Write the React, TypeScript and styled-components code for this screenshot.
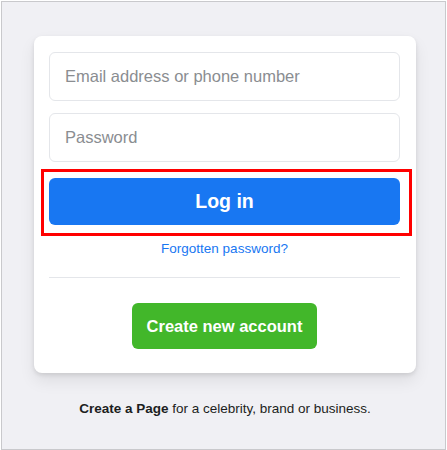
import React from 'react';
import styled, { createGlobalStyle } from 'styled-components';

const GlobalStyle = createGlobalStyle`
  html, body {
    margin: 0;
    padding: 0;
    background: #ffffff;
  }
  body {
    font-family: "Liberation Sans", Arial, Helvetica, sans-serif;
  }
`;

const Frame = styled.div`
  box-sizing: border-box;
  margin: 1px 1px 0 1px;
  height: 449px;
  border: 1px solid #c9c9cc;
  background: #f0f0f4;
  padding: 34px 0 0 32px;
  display: flex;
  flex-direction: column;
  align-items: flex-start;
`;

const Card = styled.div`
  box-sizing: border-box;
  width: 382px;
  background: #ffffff;
  border-radius: 8px;
  box-shadow: 0 2px 4px rgba(0, 0, 0, 0.1), 0 8px 16px rgba(0, 0, 0, 0.08);
  padding: 16px 16px 24px 15px;
  display: flex;
  flex-direction: column;
`;

const Input = styled.input<{ $gap?: number }>`
  box-sizing: border-box;
  width: 100%;
  height: 49px;
  margin: 0 0 ${({ $gap }) => $gap ?? 0}px 0;
  padding: 0 15px;
  border: 1px solid #e4e6ea;
  border-radius: 6px;
  font-family: "Liberation Sans", Arial, sans-serif;
  font-size: 16.5px;
  color: #1c1e21;
  outline: none;
  &::placeholder {
    color: #8a8d91;
  }
`;

// red annotation drawn over the login button
const Highlight = styled.div`
  position: relative;
  margin-top: 16px;
  &::after {
    content: '';
    position: absolute;
    top: -9px;
    left: -8px;
    right: -12px;
    bottom: -11px;
    border: 3px solid #ff0000;
    pointer-events: none;
  }
`;

const LoginButton = styled.button`
  display: block;
  width: 100%;
  height: 47px;
  border: none;
  border-radius: 6px;
  background: #1877f2;
  color: #ffffff;
  font-family: "Liberation Sans", Arial, sans-serif;
  font-size: 19.5px;
  font-weight: 700;
  cursor: pointer;
`;

const ForgotLink = styled.a`
  display: block;
  margin-top: 15px;
  text-align: center;
  color: #1877f2;
  font-size: 13.5px;
  line-height: 18px;
  text-decoration: none;
`;

const Divider = styled.hr`
  width: 100%;
  margin: 19px 0 0 0;
  border: none;
  border-top: 1px solid #e4e6ea;
`;

const CreateButton = styled.button`
  align-self: center;
  margin-top: 25px;
  width: 185px;
  height: 46px;
  border: none;
  border-radius: 6px;
  background: #42b72a;
  color: #ffffff;
  font-family: "Liberation Sans", Arial, sans-serif;
  font-size: 16.5px;
  font-weight: 700;
  cursor: pointer;
`;

const Footer = styled.p`
  width: 382px;
  margin: 27px 0 0 0;
  text-align: center;
  font-size: 13.5px;
  line-height: 18px;
  color: #1c1e21;
  b {
    font-weight: 700;
  }
`;

export default function App() {
  return (
    <>
      <GlobalStyle />
      <Frame>
        <Card>
          <Input type="text" placeholder="Email address or phone number" $gap={12} />
          <Input type="password" placeholder="Password" />
          <Highlight>
            <LoginButton type="button">Log in</LoginButton>
          </Highlight>
          <ForgotLink href="#">Forgotten password?</ForgotLink>
          <Divider />
          <CreateButton type="button">Create new account</CreateButton>
        </Card>
        <Footer>
          <b>Create a Page</b> for a celebrity, brand or business.
        </Footer>
      </Frame>
    </>
  );
}
